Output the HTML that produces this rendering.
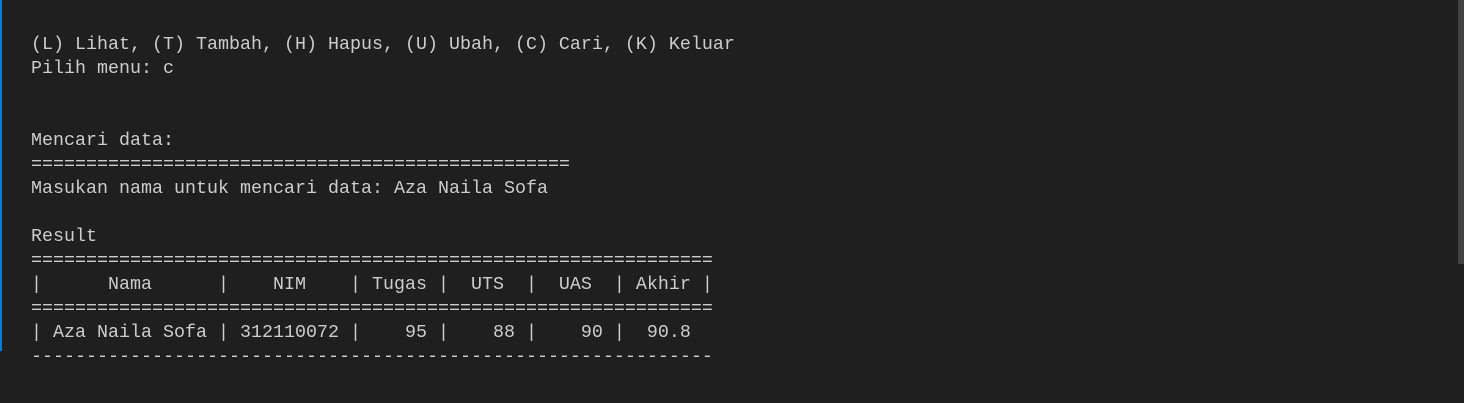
<!DOCTYPE html>
<html><head><meta charset="utf-8"><style>
html,body{margin:0;padding:0;width:1464px;height:403px;overflow:hidden;background:#1f1f1f;}
.blue{position:absolute;left:0;top:0;width:2px;height:351px;background:#0a7ad4;}
.sb{position:absolute;left:1458px;top:0;width:6px;height:264px;background:#424242;}
pre{position:absolute;left:31px;top:33px;margin:0;font-family:"Liberation Mono",monospace;font-size:18.33px;line-height:24px;color:#cccccc;white-space:pre;}
</style></head><body>
<div class="blue"></div><div class="sb"></div>
<pre>(L) Lihat, (T) Tambah, (H) Hapus, (U) Ubah, (C) Cari, (K) Keluar
Pilih menu: c


Mencari data:
=================================================
Masukan nama untuk mencari data: Aza Naila Sofa

Result
==============================================================
|      Nama      |    NIM    | Tugas |  UTS  |  UAS  | Akhir |
==============================================================
| Aza Naila Sofa | 312110072 |    95 |    88 |    90 |  90.8
--------------------------------------------------------------</pre>
</body></html>
